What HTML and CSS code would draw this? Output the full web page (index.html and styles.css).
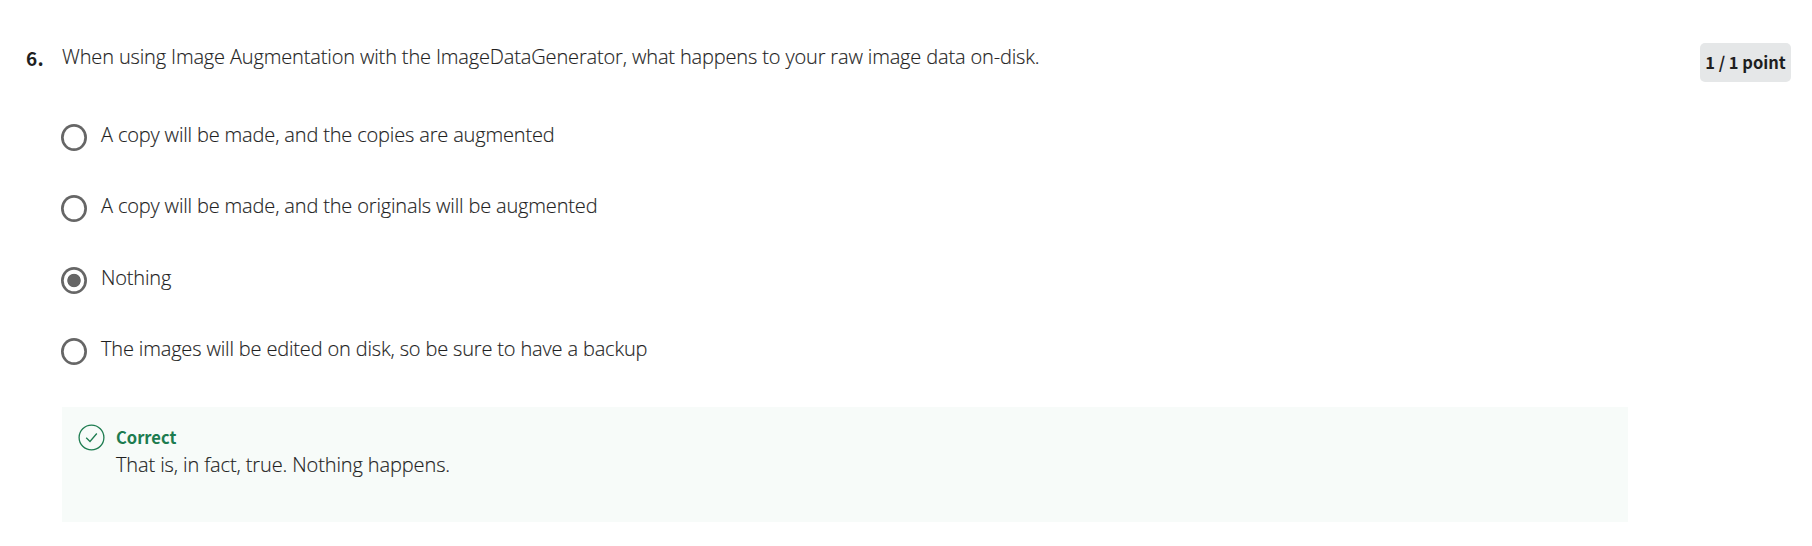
FILE: index.html
```html
<!DOCTYPE html>
<html lang="en"><head><meta charset="utf-8"><title>Quiz question</title><link rel="stylesheet" href="styles.css"></head>
<body><main class="question">
<div class="number">6.</div>
<div class="content"><p class="prompt">When using Image Augmentation with the ImageDataGenerator, what happens to your raw image data on-disk.</p>
<div class="options">
<div class="option"><span class="radio"></span><span class="label">A copy will be made, and the copies are augmented</span></div>
<div class="option"><span class="radio"></span><span class="label">A copy will be made, and the originals will be augmented</span></div>
<div class="option"><span class="radio checked"></span><span class="label">Nothing</span></div>
<div class="option"><span class="radio"></span><span class="label">The images will be edited on disk, so be sure to have a backup</span></div>
</div>
<section class="feedback"><svg class="check" viewBox="0 0 27 27"><circle cx="13.5" cy="13.5" r="12.4"/><path d="M8.2 13.8l3.8 3.7 6.8-8"/></svg><div><div class="status">Correct</div><div class="detail">That is, in fact, true. Nothing happens.</div></div></section>
</div>
<div class="points">1 / 1 point</div>
</main></body></html>
```
FILE: styles.css
```css
*{box-sizing:border-box}
body{margin:0;background:#fff;color:#1f1f1f;font-family:"Open Sans",sans-serif;font-size:20px;font-weight:300;line-height:28px;letter-spacing:-.15px}
.prompt,.label,.detail{-webkit-text-stroke:.15px currentColor}
.label{letter-spacing:-.16px}
.question{display:flex;align-items:flex-start;padding:43px 21px 0 26px;height:522px}
.number{width:36px;flex:none;padding-top:1px;font-family:"Noto Sans CJK SC",sans-serif;font-size:19px;font-weight:700;letter-spacing:.3px}
.content{width:1566px;flex:none}
.prompt{margin:0;height:59px}
.option{display:flex;align-items:flex-start;height:71.4px;padding-top:19px}
.radio{width:26px;height:27px;box-shadow:inset 0 0 0 2.7px #666;border-radius:50%;margin:3px 14px 0 -1px;flex:none}
.checked{background:radial-gradient(circle,#666 6.3px,transparent 7.1px)}
.feedback{display:flex;background:#f7fbf9;height:115px;margin-top:19px;padding:17px 16px}
.check{width:27px;height:27px;margin-right:11px;flex:none;fill:none;stroke:#1d7c50;stroke-width:1.3}
.status{font:700 16.5px/26px "Noto Sans CJK SC",sans-serif;color:#1d7c50;letter-spacing:0}
.detail{margin-top:1px;letter-spacing:-.12px}
.points{margin-left:auto;width:91px;height:39px;border-radius:5px;background:#e5e7e8;text-align:center;font:700 16.5px/39px "Noto Sans CJK SC",sans-serif;letter-spacing:0;white-space:nowrap}
```
